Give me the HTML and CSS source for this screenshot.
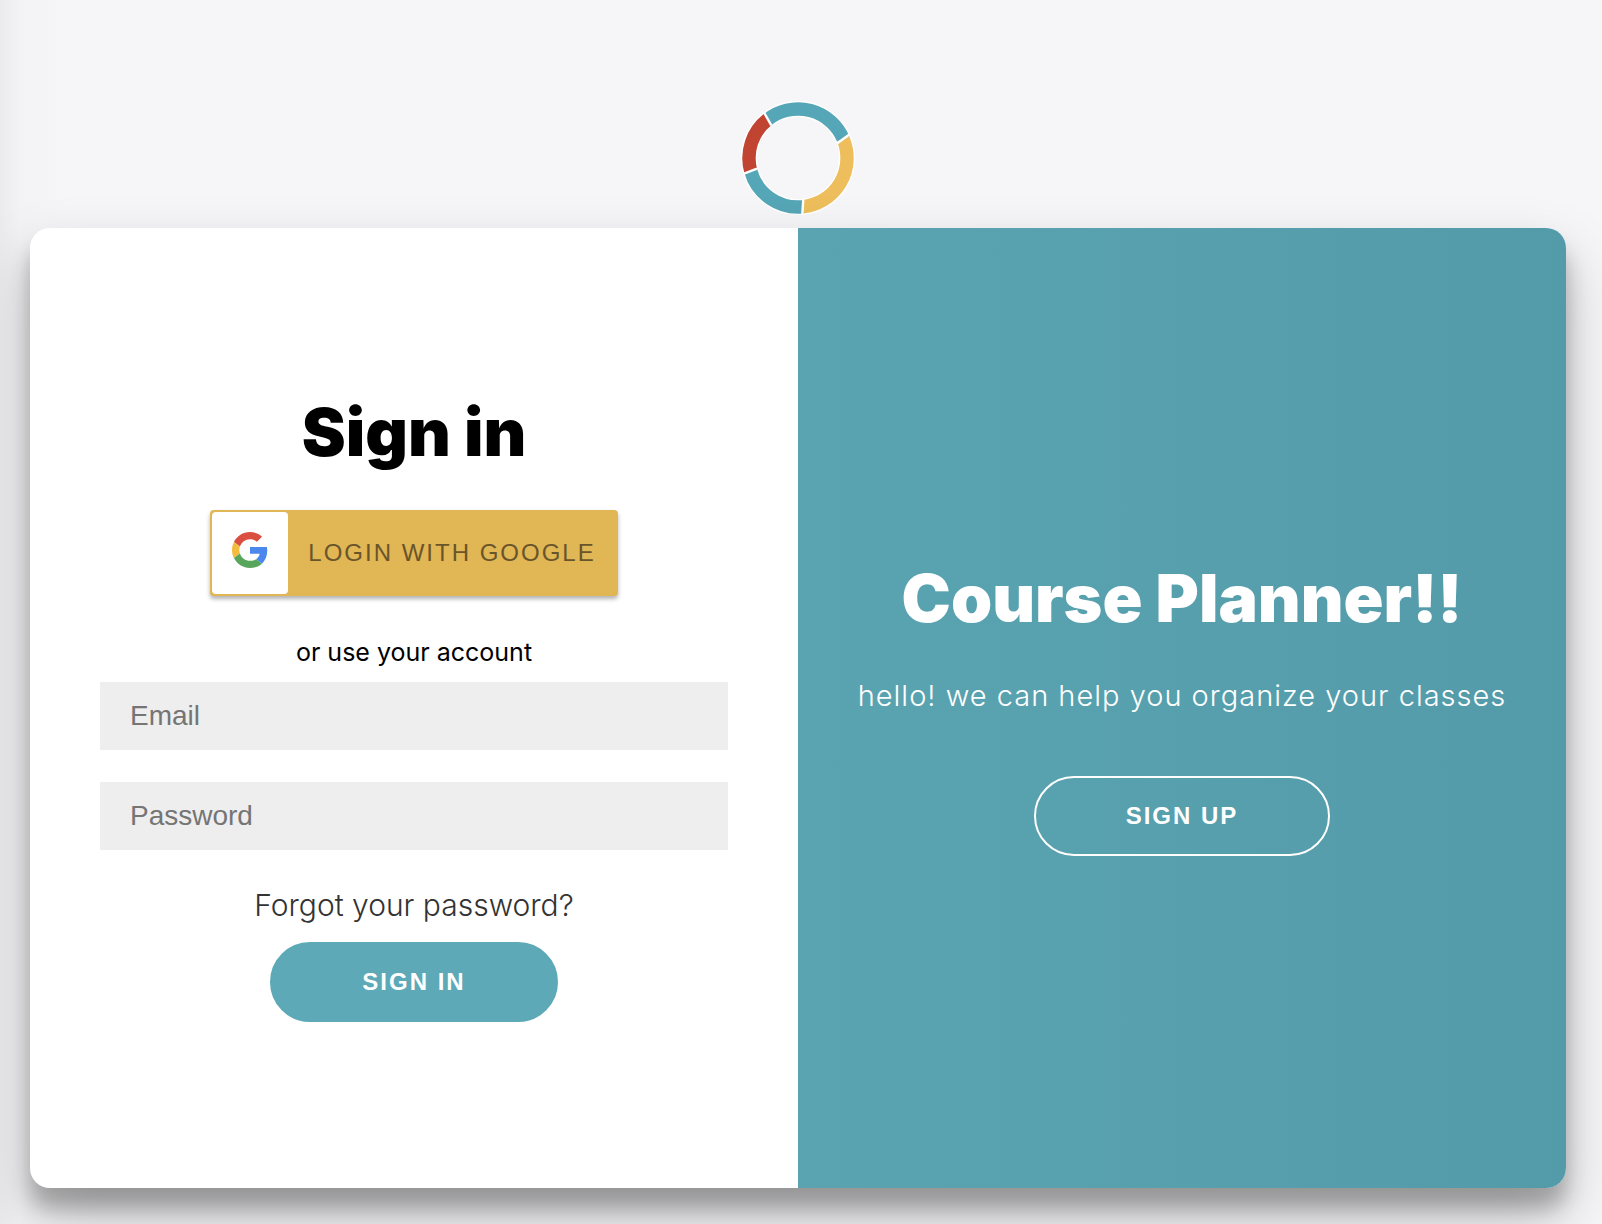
FILE: index.html
```html
<!DOCTYPE html>
<html lang="en">
<head>
<meta charset="utf-8">
<meta name="viewport" content="width=device-width, initial-scale=1">
<title>Course Planner</title>
<link rel="stylesheet" href="styles.css">
</head>
<body>
<svg class="logo" viewBox="0 0 120 120" aria-hidden="true">
  <circle cx="60" cy="60" r="49" fill="none" stroke="#fff" stroke-width="16"/>
  <g fill="none" stroke-width="13.4">
    <path d="M29.8 21.4A49 49 0 0 1 105.2 41" stroke="#55a6b6"/>
    <path d="M105.2 41A49 49 0 0 1 64.8 108.8" stroke="#edbe5b"/>
    <path d="M64.8 108.8A49 49 0 0 1 12.8 73.2" stroke="#55a6b6"/>
    <path d="M12.8 73.2A49 49 0 0 1 29.8 21.4" stroke="#c04431"/>
  </g>
  <path d="M26.3 15L33.3 27.3M111 36.7L99.3 45.3M65.3 101.3L64.3 116.3M19 70.7L6 75.7" stroke="#fff" stroke-width="2.4"/>
</svg>
<main class="card">
  <form class="panel signin">
    <h1 class="title">Sign in</h1>
    <button class="google" type="button">
      <span class="google-icon">
        <svg viewBox="0 0 48 48" aria-hidden="true">
          <path fill="#db4f40" d="M24 9.5c3.54 0 6.71 1.22 9.21 3.6l6.85-6.85C35.9 2.38 30.47 0 24 0 14.62 0 6.51 5.38 2.56 13.22l7.98 6.19C12.43 13.72 17.74 9.5 24 9.5z"/>
          <path fill="#4c87ee" d="M46.98 24.55c0-1.57-.15-3.09-.38-4.55H24v9.02h12.94c-.58 2.96-2.26 5.48-4.78 7.18l7.73 6c4.51-4.18 7.09-10.36 7.09-17.65z"/>
          <path fill="#f4bc3f" d="M10.53 28.59c-.48-1.45-.76-2.99-.76-4.59s.27-3.14.76-4.59l-7.98-6.19C.92 16.46 0 20.12 0 24c0 3.88.92 7.54 2.56 10.78l7.97-6.19z"/>
          <path fill="#58a65b" d="M24 48c6.48 0 11.93-2.13 15.89-5.81l-7.73-6c-2.15 1.45-4.92 2.3-8.16 2.3-6.26 0-11.57-4.22-13.47-9.91l-7.98 6.19C6.51 42.62 14.62 48 24 48z"/>
        </svg>
      </span>
      <span class="google-label">LOGIN WITH GOOGLE</span>
    </button>
    <p class="hint">or use your account</p>
    <input class="field" type="email" placeholder="Email" aria-label="Email">
    <input class="field" type="password" placeholder="Password" aria-label="Password">
    <a class="forgot" href="#">Forgot your password?</a>
    <button class="pill" type="submit">SIGN IN</button>
  </form>
  <section class="panel welcome">
    <h2 class="title">Course Planner!!</h2>
    <p class="intro">hello! we can help you organize your classes</p>
    <button class="pill ghost" type="button">SIGN UP</button>
  </section>
</main>
</body>
</html>
```
FILE: styles.css
```css
* {
  box-sizing: border-box;
}

body {
  display: flex;
  flex-direction: column;
  align-items: center;
  gap: 10px;
  min-height: 100vh;
  margin: 0;
  padding: 98px 36px 36px 30px;
  background: #f6f6f8 linear-gradient(to right, #ebebed, #f3f3f5 20px, #f6f6f8 70px);
  font-family: Inter, "Open Sans", sans-serif;
}

.logo {
  width: 120px;
  height: 120px;
}

.card {
  display: grid;
  grid-template-columns: 1fr 1fr;
  flex: 1;
  width: 100%;
  border-radius: 20px;
  overflow: hidden;
  background: #fff;
  box-shadow: 0 28px 56px rgba(0, 0, 0, 0.25), 0 20px 20px rgba(0, 0, 0, 0.22);
}

.panel {
  display: flex;
  flex-direction: column;
  align-items: center;
  justify-content: center;
  text-align: center;
}

.signin {
  padding: 0 70px 2px;
}

.welcome {
  padding: 0 40px 2px;
  background: linear-gradient(to right, #5aa4b1, #549baa);
  color: #fff;
}

.title {
  margin: 0;
  font-size: 66px;
  font-weight: 900;
  line-height: 80px;
}

.google {
  display: flex;
  align-items: stretch;
  height: 86px;
  margin: 38px 0 40px;
  padding: 2px;
  border: 0;
  border-radius: 4px;
  background: #e1b655;
  box-shadow: 0 3px 4px rgba(0, 0, 0, 0.3);
}

.google-icon {
  display: flex;
  justify-content: center;
  width: 76px;
  padding-top: 20px;
  border-radius: 4px;
  background: #fff;
}

.google-icon svg {
  width: 36px;
  height: 36px;
}

.google-label {
  align-self: center;
  padding: 0 20px;
  color: #69552a;
  font: 24px/32px "Liberation Sans", Arial, sans-serif;
  letter-spacing: 2px;
}

.hint {
  margin: 0 0 14px;
  font-size: 25px;
  line-height: 32px;
}

.field {
  width: 100%;
  height: 68px;
  margin-bottom: 32px;
  padding: 0 30px;
  border: 0;
  border-radius: 0;
  background: #eee;
  color: #333;
  font: 28px/32px "Liberation Sans", Arial, sans-serif;
}

.field::placeholder {
  color: #757575;
}

.forgot {
  margin: 4px 0 18px;
  color: #333;
  font-size: 30px;
  font-weight: 300;
  line-height: 38px;
  text-decoration: none;
}

.pill {
  height: 80px;
  padding: 0 90px;
  border: 2px solid #5da9b7;
  border-radius: 40px;
  background: #5da9b7;
  color: #fff;
  font: bold 24px/32px "Liberation Sans", Arial, sans-serif;
  letter-spacing: 2px;
}

.intro {
  margin: 38px 0 60px;
  font-size: 29px;
  font-weight: 300;
  line-height: 40px;
  letter-spacing: 1px;
}

.ghost {
  border-color: #fff;
  background: transparent;
}
```
